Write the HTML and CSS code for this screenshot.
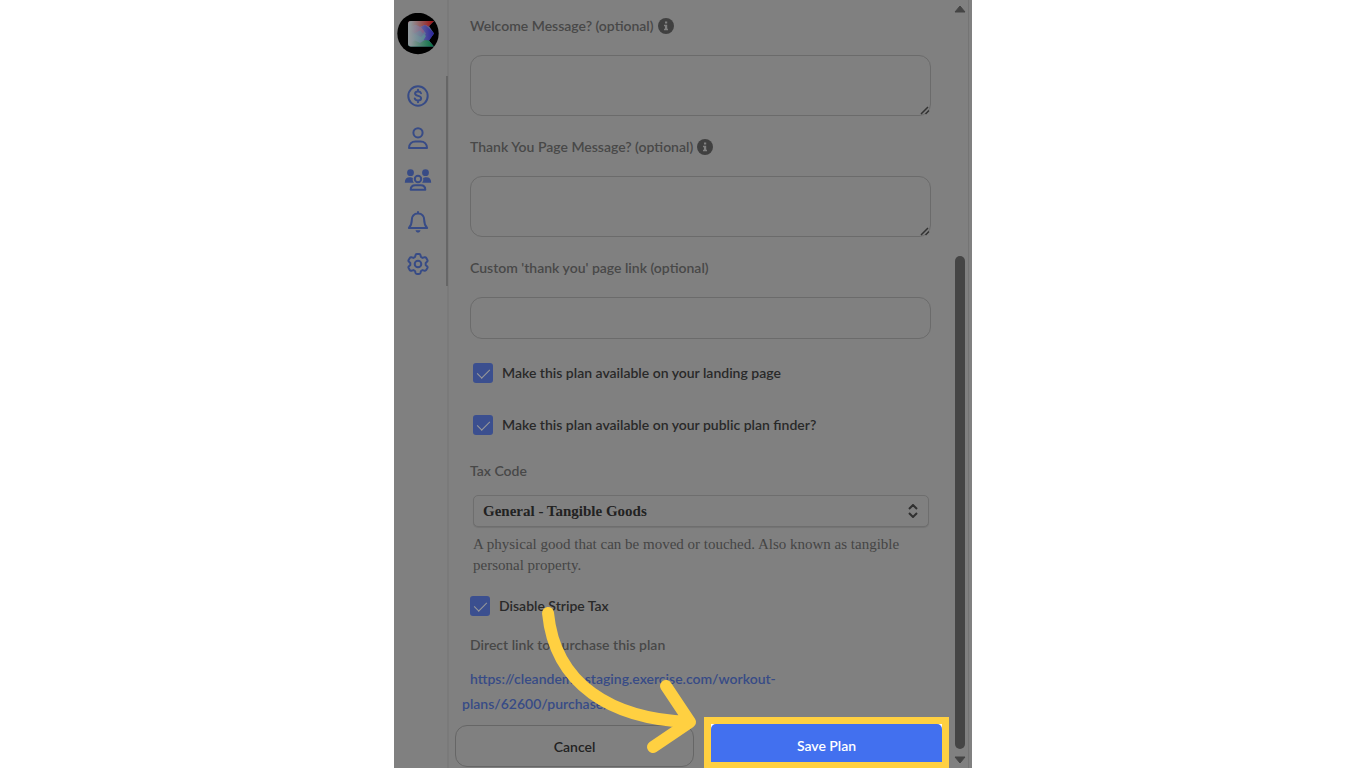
FILE: index.html
```html
<!DOCTYPE html>
<html lang="en">
<head>
    <meta charset="UTF-8">
    <meta name="viewport" content="width=device-width, initial-scale=1.0">
    <title>Edit Plan</title>
    <link rel="stylesheet" href="styles.css">
</head>
<body>
    <div class="panel">
        <nav class="sidebar">
            <a href="#" class="logo" aria-label="Home">
                <svg width="42" height="42" viewBox="0 0 42 42">
                    <defs>
                        <linearGradient id="fade" x1="0" x2="1" y1="0" y2="0">
                            <stop offset="0.1" stop-color="#8f979b"/>
                            <stop offset="0.9" stop-color="#8f979b" stop-opacity="0"/>
                        </linearGradient>
                        <clipPath id="mark"><path d="M14 8h23l-5 5 5 7.500-5 7 5 6H14q-3 0-3-3V11q0-3 3-3z"/></clipPath>
                    </defs>
                    <circle cx="21" cy="20.500" r="20.700" fill="#000"/>
                    <g clip-path="url(#mark)">
                        <path fill="#4a5a90" d="M11 8h27v26H11z"/>
                        <path fill="#9c1717" d="M11 8h27l-6 5.500-4-1.500-5 2-4-2-8 4z"/>
                        <path fill="#7a3a78" d="M11 15l7-3 5 2 5-2 3 1-5 7.500-3-3-5 2.500-7-2z"/>
                        <path fill="#2f2a9c" d="M24 14l4-2 10 8.500-6 8-7-2 4-6z"/>
                        <path fill="#3c7a90" d="M11 24l7-3 6 3 3-3 2 2-3 5-4 2-4-2-7 3z"/>
                        <path fill="#0b7446" d="M11 31l7-3.500 5 2.500 5-3 4 .5 6 7H11z"/>
                        <path fill="url(#fade)" d="M11 8h27v26H11z"/>
                    </g>
                </svg>
            </a>
            <a href="#" aria-label="Payments">
                <svg width="22" height="22" viewBox="0 0 22 22">
                    <circle cx="11" cy="11" r="9.700"/>
                    <path d="M14 8.200C13.600 7 12.500 6.500 11 6.500c-1.700 0-2.900.8-2.900 2.100 0 3.200 6 1.400 6 4.600 0 1.400-1.300 2.200-3.100 2.200-1.600 0-2.800-.7-3.200-1.900M11 4.800v1.700M11 15.400v1.800"/>
                </svg>
            </a>
            <a href="#" aria-label="Clients">
                <svg width="22" height="22" viewBox="0 0 22 22">
                    <circle cx="11" cy="5.800" r="4.600"/>
                    <path d="M2 21c0-4.200 2.800-6.600 6.500-6.600h5c3.700 0 6.500 2.400 6.500 6.600z"/>
                </svg>
            </a>
            <a href="#" aria-label="Groups">
                <svg width="28" height="22" viewBox="0 0 28 22">
                    <g class="solid">
                        <circle cx="6.500" cy="3.700" r="3.400"/>
                        <circle cx="21.500" cy="3.700" r="3.400"/>
                        <path d="M.8 13.700c0-3.700 1.800-5.500 4.800-5.500 1.500 0 2.600.4 3.300 1-.5 1.800 0 3.300 1 4.500zM27.200 13.700c0-3.700-1.800-5.500-4.800-5.500-1.500 0-2.600.4-3.300 1 .5 1.800 0 3.300-1 4.500z"/>
                    </g>
                    <circle cx="14" cy="10" r="3.200"/>
                    <path d="M6.700 20.800c0-3 1.800-4.500 4.500-4.500h5.600c2.700 0 4.500 1.500 4.500 4.500z"/>
                </svg>
            </a>
            <a href="#" aria-label="Notifications">
                <svg width="22" height="22" viewBox="0 0 22 22">
                    <path d="M11 1v1.500M11 2.500c-4.200 0-6.200 3-6.200 6.500 0 4.300-1.100 6-2.900 8h18.200c-1.800-2-2.900-3.700-2.900-8 0-3.500-2-6.500-6.200-6.500z"/>
                    <path class="solid" d="M8.500 19.200h5c-.3 1.600-1.300 2.300-2.500 2.300s-2.200-.7-2.500-2.300z"/>
                </svg>
            </a>
            <a href="#" aria-label="Settings">
                <svg width="22" height="22" viewBox="0 0 22 22">
                    <path d="M8.600 1.900Q9 1 10 1h2q1 0 1.400.9l.6 2.100 1.500.9 2.200-.6q1-.2 1.500.6l1.200 2q.5.900-.2 1.700L18.700 10v2l1.500 1.400q.7.800.2 1.700l-1.200 2q-.5.800-1.500.6l-2.200-.6-1.500.9-.6 2.100q-.4.900-1.400.9h-2q-1 0-1.400-.9L8 18l-1.500-.9-2.200.6q-1 .2-1.500-.6l-1.200-2q-.5-.9.200-1.700L3.300 12v-2L1.800 8.600q-.7-.8-.2-1.700l1.200-2q.5-.8 1.500-.6l2.200.6L8 4z"/>
                    <circle cx="11" cy="11" r="3.300"/>
                </svg>
            </a>
        </nav>

        <form class="plan-form">
            <div class="field">
                <div class="label-row">
                    <label for="welcome">Welcome Message? (optional)</label>
                    <svg class="info" width="16" height="16" viewBox="0 0 16 16"><circle cx="8" cy="8" r="8"/><path d="M7 3.500h2.200v2H7zM6 6.800h3.200v4H10v1.500H6v-1.500h1V8.300H6z"/></svg>
                </div>
                <div class="textarea-wrap">
                    <textarea id="welcome"></textarea>
                    <svg class="grip" width="10" height="9" viewBox="0 0 10 9"><path d="M1 8l7-7M5.500 8L9 4.500"/></svg>
                </div>
            </div>
            <div class="field">
                <div class="label-row">
                    <label for="thanks">Thank You Page Message? (optional)</label>
                    <svg class="info" width="16" height="16" viewBox="0 0 16 16"><circle cx="8" cy="8" r="8"/><path d="M7 3.500h2.200v2H7zM6 6.800h3.200v4H10v1.500H6v-1.500h1V8.300H6z"/></svg>
                </div>
                <div class="textarea-wrap">
                    <textarea id="thanks"></textarea>
                    <svg class="grip" width="10" height="9" viewBox="0 0 10 9"><path d="M1 8l7-7M5.500 8L9 4.500"/></svg>
                </div>
            </div>
            <div class="field">
                <div class="label-row">
                    <label for="thanksLink">Custom 'thank you' page link (optional)</label>
                </div>
                <input type="text" id="thanksLink">
            </div>

            <div class="checks">
                <label class="check"><input type="checkbox" checked>Make this plan available on your landing page</label>
                <label class="check"><input type="checkbox" checked>Make this plan available on your public plan finder?</label>
            </div>

            <label class="tax-label" for="taxCode">Tax Code</label>
            <div class="tax">
                <div class="select-wrap">
                    <select id="taxCode">
                        <option>General - Tangible Goods</option>
                    </select>
                    <svg width="10" height="14" viewBox="0 0 10 14"><path d="M1 5l4-4 4 4M1 9l4 4 4-4"/></svg>
                </div>
                <p>A physical good that can be moved or touched. Also known as tangible personal property.</p>
            </div>

            <label class="check stripe"><input type="checkbox" checked>Disable Stripe Tax</label>

            <p class="direct">Direct link to purchase this plan</p>
            <p class="link"><a href="#">https://cleandemo.staging.exercise.com/workout-<br>plans/62600/purchase/</a></p>

            <div class="actions">
                <button type="button" class="cancel">Cancel</button>
                <div class="highlight">
                    <button type="submit" class="save">Save Plan</button>
                </div>
            </div>
        </form>

        <div class="scrollbar">
            <svg width="12" height="8" viewBox="0 0 12 8"><path d="M6 1l5 6H1z"/></svg>
            <div class="thumb"></div>
            <svg width="12" height="8" viewBox="0 0 12 8"><path d="M6 7l5-6H1z"/></svg>
        </div>
        <div class="edge"></div>

        <!-- arrow pointing at the save button -->
        <svg class="arrow" width="180" height="180" viewBox="0 0 180 180">
            <path d="M18 23C25 95 82 129 159 132M136 96l24 36-37 25"/>
        </svg>
    </div>
</body>
</html>
```
FILE: styles.css
```css
* {
    box-sizing: border-box;
}

body {
    margin: 0;
    background-color: #fff;
    font-family: Lato, sans-serif;
    font-size: 14px;
    font-weight: 600;
    color: #292929;
}

p {
    margin: 0;
}

.panel {
    position: relative;
    display: flex;
    width: 100%;
    max-width: 578px;
    height: 100vh;
    margin: 0 auto;
    overflow: hidden;
    background-color: #808080;
}

/* Sidebar */
.sidebar {
    position: relative;
    flex: none;
    width: 55px;
    padding: 13px 5px 0 0;
    display: flex;
    flex-direction: column;
    align-items: center;
    gap: 20px;
    border-right: 2px solid #7a7a7a;
}

.sidebar::after {
    content: "";
    position: absolute;
    top: 76px;
    right: -1px;
    width: 2px;
    height: 210px;
    background-color: #666;
}

.sidebar a {
    display: flex;
    color: #374b86;
}

.sidebar .logo {
    margin-bottom: 10px;
}

.sidebar a:not(.logo) svg {
    fill: none;
    stroke: currentColor;
    stroke-width: 2;
    stroke-linecap: round;
    stroke-linejoin: round;
}

.sidebar .solid {
    fill: currentColor;
    stroke: none;
}

/* Form */
.plan-form {
    flex: 1;
    min-width: 0;
    padding: 15px 23px 0 21px;
}

.field {
    margin-bottom: 20px;
}

.label-row {
    display: flex;
    align-items: center;
    gap: 4px;
    margin-bottom: 18px;
    line-height: 22px;
    color: #484848;
}

.info {
    fill: #404040;
}

.info path {
    fill: #808080;
}

.textarea-wrap {
    position: relative;
    display: flex;
}

textarea,
input[type="text"] {
    display: block;
    width: 100%;
    height: 61px;
    padding: 10px 14px;
    border: 1px solid #6b6b6b;
    border-radius: 12px;
    background-color: transparent;
    font: inherit;
    color: inherit;
    resize: none;
}

input[type="text"] {
    height: 42px;
}

.grip {
    position: absolute;
    right: 1px;
    bottom: 1px;
    fill: none;
    stroke: #333;
    stroke-width: 1.5;
}

.checks {
    display: flex;
    flex-direction: column;
    gap: 32px;
    margin: 24px 0 25px 3px;
}

.check {
    display: flex;
    align-items: center;
    gap: 9px;
    line-height: 20px;
}

.check input {
    position: relative;
    appearance: none;
    width: 20px;
    height: 20px;
    margin: 0;
    border-radius: 3px;
    background-color: #3b4f8f;
}

.check input:checked::after {
    content: "";
    position: absolute;
    left: 7px;
    top: 3px;
    width: 6px;
    height: 11px;
    border: solid #999;
    border-width: 0 1px 1px 0;
    transform: rotate(45deg);
}

.tax-label {
    display: block;
    margin-bottom: 13px;
    line-height: 22px;
    color: #484848;
}

.tax {
    margin: 0 2px 20px 3px;
    font-family: "Liberation Serif", serif;
}

.select-wrap {
    position: relative;
}

.select-wrap svg {
    position: absolute;
    top: 9px;
    right: 11px;
    fill: none;
    stroke: #303030;
    stroke-width: 2;
    pointer-events: none;
}

select {
    display: block;
    appearance: none;
    width: 100%;
    height: 32px;
    padding: 0 30px 0 9px;
    border: 1px solid #6e6e6e;
    border-radius: 5px;
    background-color: #808080;
    box-shadow: 0 1px 1px rgba(0, 0, 0, 0.1);
    font: bold 15px "Liberation Serif", serif;
    color: #222;
}

.tax p {
    margin-top: 7px;
    font-size: 15px;
    font-weight: normal;
    line-height: 21px;
    color: #454545;
}

.stripe {
    margin-bottom: 18px;
}

.direct {
    margin-bottom: 10px;
    line-height: 22px;
    color: #484848;
}

.link {
    margin-left: -8px;
    text-indent: 8px;
    line-height: 25px;
}

.link a {
    color: #374b86;
    text-decoration: none;
}

.actions {
    display: grid;
    grid-template-columns: 239fr 245fr;
    align-items: start;
    gap: 10px;
    margin: 1px -18px 0 -15px;
}

button {
    font: inherit;
    cursor: pointer;
}

.cancel {
    height: 42px;
    margin-top: 8px;
    border: 1px solid #666;
    border-radius: 12px;
    background-color: transparent;
    color: #222;
}

.highlight {
    border: 7px solid #ffd041;
    background-color: #fff;
}

.save {
    display: block;
    width: 100%;
    height: 38px;
    padding: 5px 0 0;
    border: none;
    border-radius: 5px 5px 0 0;
    background-color: #4270ef;
    color: #fff;
}

/* Scrollbar */
.scrollbar {
    flex: none;
    width: 12px;
    padding: 5px 0 4px;
    display: flex;
    flex-direction: column;
    align-items: center;
}

.scrollbar svg {
    flex: none;
    fill: #454545;
    stroke: #454545;
    stroke-linejoin: round;
}

.thumb {
    width: 10px;
    height: 65%;
    margin: auto 0 7px;
    border-radius: 5px;
    background-color: #454545;
}

.edge {
    flex: none;
    width: 4px;
    margin-left: 2px;
    border-left: 1px solid #747474;
}

.arrow {
    position: absolute;
    left: 136px;
    top: 590px;
    fill: none;
    stroke: #ffd041;
    stroke-width: 12;
    stroke-linecap: round;
    stroke-linejoin: round;
    pointer-events: none;
}
```
